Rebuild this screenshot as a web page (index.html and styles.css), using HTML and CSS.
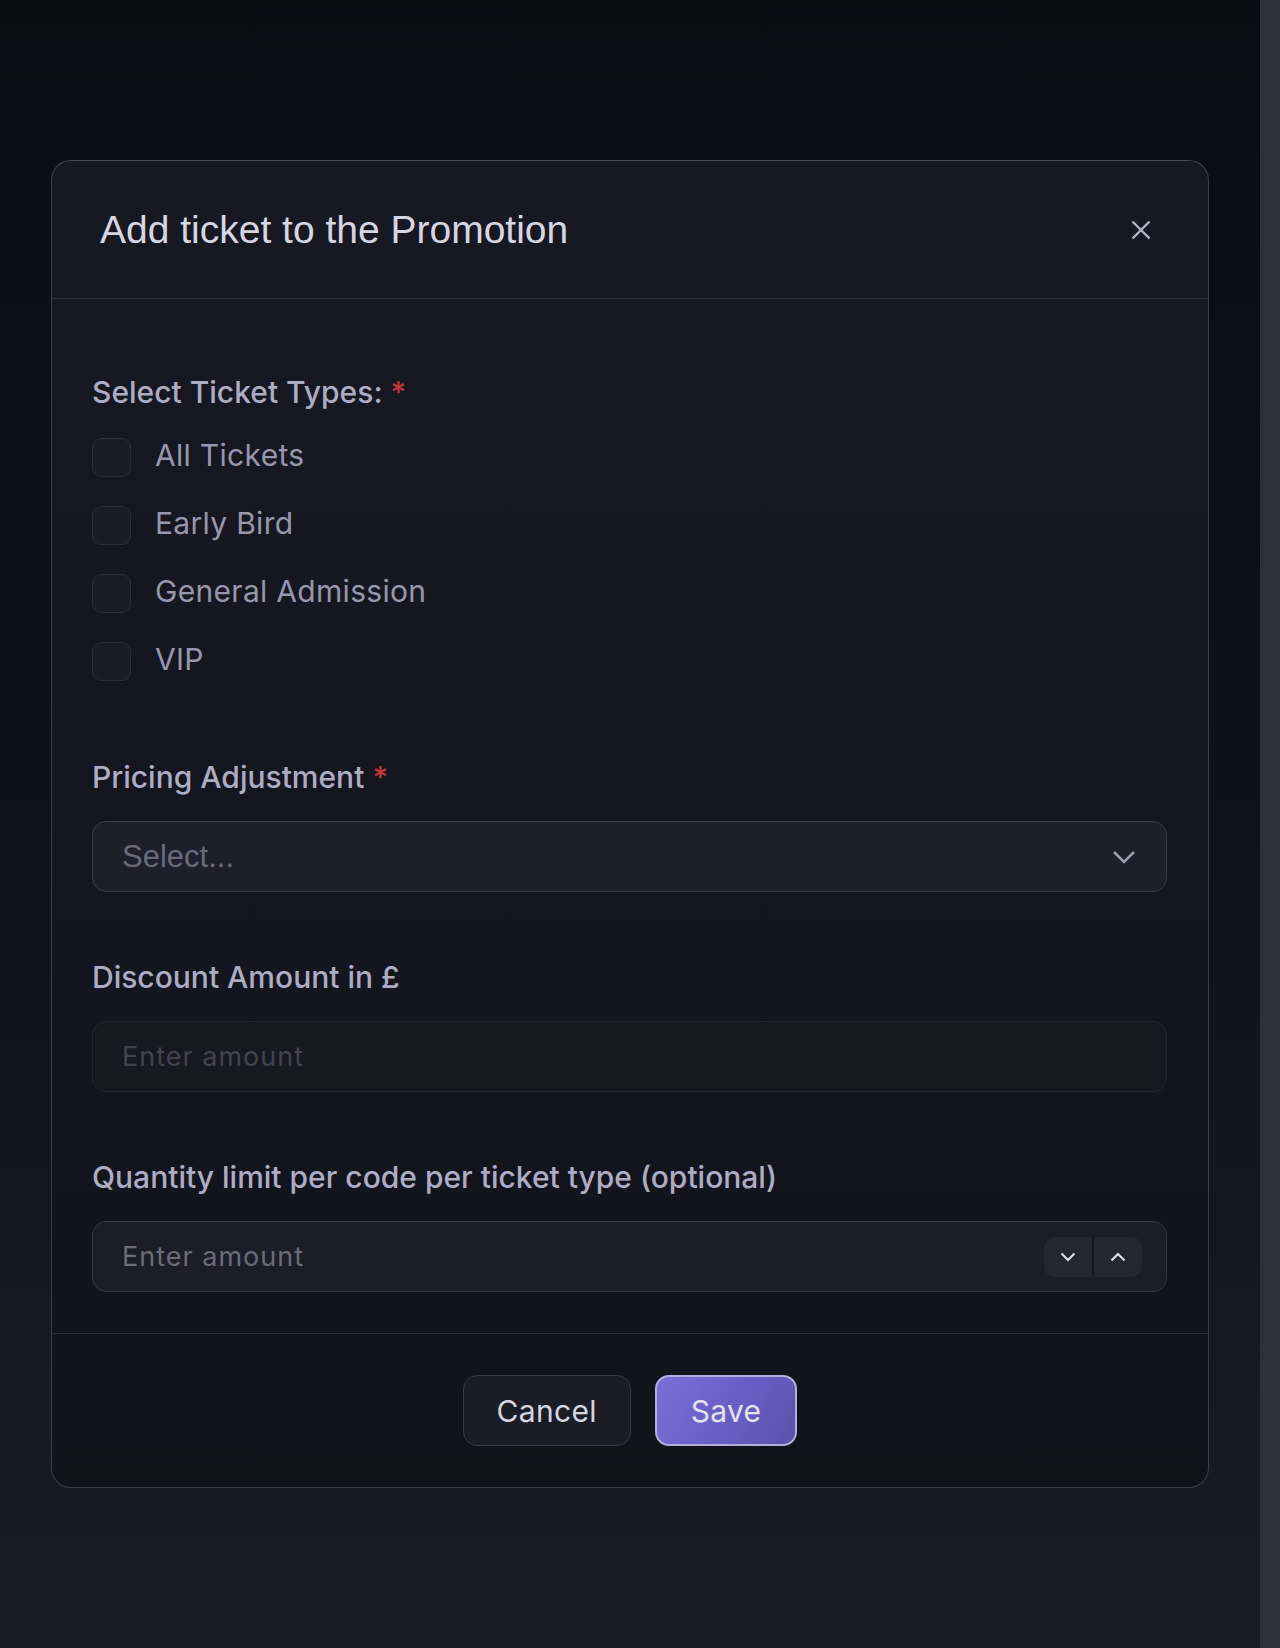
FILE: index.html
```html
<!DOCTYPE html>
<html lang="en">
<head>
    <meta charset="UTF-8">
    <meta name="viewport" content="width=device-width, initial-scale=1.0">
    <title>Add ticket to the Promotion</title>
    <link rel="stylesheet" href="styles.css">
</head>
<body>
    <div class="page">
        <main class="stage">
            <div class="modal">
                <header class="modal-head">
                    <h2 class="modal-title">Add ticket to the Promotion</h2>
                    <button class="close" type="button" aria-label="Close">
                        <svg width="20" height="20" viewBox="0 0 20 20"><path d="M1.5 1.5L18.5 18.5M18.5 1.5L1.5 18.5" /></svg>
                    </button>
                </header>

                <form class="modal-body">
                    <div class="field field-tickets">
                        <div class="label">Select Ticket Types: <span class="req">*</span></div>
                        <ul class="checks">
                            <li><label class="check"><input type="checkbox"><span>All Tickets</span></label></li>
                            <li><label class="check"><input type="checkbox"><span>Early Bird</span></label></li>
                            <li><label class="check"><input type="checkbox"><span>General Admission</span></label></li>
                            <li><label class="check"><input type="checkbox"><span>VIP</span></label></li>
                        </ul>
                    </div>

                    <div class="field">
                        <div class="label">Pricing Adjustment <span class="req">*</span></div>
                        <div class="select">
                            <span class="select-text">Select...</span>
                            <svg class="select-arrow" width="24" height="14" viewBox="0 0 24 14"><path d="M2 2L12 12L22 2" /></svg>
                        </div>
                    </div>

                    <div class="field">
                        <div class="label">Discount Amount in £</div>
                        <input class="input input-off" type="text" placeholder="Enter amount" disabled>
                    </div>

                    <div class="field">
                        <div class="label">Quantity limit per code per ticket type (optional)</div>
                        <div class="number">
                            <input class="input" type="text" placeholder="Enter amount">
                            <div class="spin">
                                <button type="button"><svg width="16" height="10" viewBox="0 0 16 10"><path d="M1.5 1.5L8 8L14.5 1.5" /></svg></button>
                                <button type="button"><svg width="16" height="10" viewBox="0 0 16 10"><path d="M1.5 8.5L8 2L14.5 8.5" /></svg></button>
                            </div>
                        </div>
                    </div>
                </form>

                <footer class="modal-foot">
                    <button class="btn btn-cancel" type="button">Cancel</button>
                    <button class="btn btn-save" type="button">Save</button>
                </footer>
            </div>
        </main>
        <div class="scrollbar"></div>
    </div>
</body>
</html>
```

FILE: styles.css
```css
/* page */
body{
    margin: 0;
    font-family: Inter, "Noto Sans", sans-serif;
    background: #0e0e17;
}
.page{
    display: flex;
    min-height: 1648px;
}
.stage{
    flex: 1;
    padding-top: 160px;
    background: linear-gradient(180deg, #0c0c15 0%, #10101a 45%, #1a1b25 100%);
}
.scrollbar{
    width: 20px;
    background: #2d3038;
}

/* modal */
.modal{
    width: 1158px;
    box-sizing: border-box;
    margin: 0 auto;
    border: 1px solid #3d3d4a;
    border-top-color: #484856;
    border-radius: 20px;
    background: linear-gradient(180deg, #181822 0%, #15151f 60%, #12121b 100%);
}
.modal-head{
    height: 138px;
    box-sizing: border-box;
    display: flex;
    align-items: center;
    justify-content: space-between;
    padding: 0 48px;
    border-bottom: 1px solid #2e2e3a;
}
.modal-title{
    margin: 0;
    font-family: "Liberation Sans", Arial, sans-serif;
    font-size: 39px;
    font-weight: 400;
    line-height: 48px;
    color: #d6d6e2;
}
.close{
    width: 38px;
    height: 38px;
    padding: 0;
    border: 0;
    background: none;
    display: flex;
    align-items: center;
    justify-content: center;
}
.close svg path{
    stroke: #b6b6c6;
    stroke-width: 2.4;
    fill: none;
}

/* form */
.modal-body{
    padding: 73px 41px 41px 40px;
    margin: 0;
}
.field + .field{ margin-top: 65px;}
.field-tickets + .field{ margin-top: 76px;}
.label{
    font-size: 30px;
    font-weight: 500;
    line-height: 40px;
    color: #aeacc2;
    margin-bottom: 24px;
}
.req{ color: #c2383c;}

.checks{
    list-style: none;
    margin: 26px 0 0;
    padding: 0;
}
.checks li + li{ margin-top: 29px;}
.check{
    display: flex;
    align-items: flex-start;
    gap: 24px;
    font-size: 30px;
    line-height: 34px;
    color: #9896ab;
    letter-spacing: 0.3px;
}
.check input{
    appearance: none;
    margin: 0;
    width: 39px;
    height: 39px;
    border: 1.5px solid #2d2d3a;
    border-radius: 9px;
    background: #1c1c27;
}

.select{
    height: 71px;
    box-sizing: border-box;
    display: flex;
    align-items: center;
    justify-content: space-between;
    padding: 0 30px 0 29px;
    border: 1.5px solid #3b3b49;
    border-radius: 14px;
    background: #1f1f2a;
}
.select-text{
    font-family: "Liberation Sans", Arial, sans-serif;
    font-size: 31px;
    color: #6a6a7a;
}
.select-arrow path{
    stroke: #9c9cae;
    stroke-width: 2.5;
    fill: none;
}

.input{
    display: block;
    width: 100%;
    height: 71px;
    box-sizing: border-box;
    margin: 0;
    padding: 0 29px;
    border: 1.5px solid #363644;
    border-radius: 14px;
    background: #1d1d27;
    font-family: Inter, sans-serif;
    font-size: 27px;
    letter-spacing: 1px;
    color: #d0d0dc;
    outline: none;
}
.input::placeholder{ color: #6b6b7a;}
.input-off{
    border-color: #252531;
    background: #181821;
}
.input-off::placeholder{ color: #43434f;}

.number{
    display: flex;
    align-items: center;
    height: 71px;
    box-sizing: border-box;
    border: 1.5px solid #363644;
    border-radius: 14px;
    background: #1d1d27;
    padding-right: 24px;
}
.number .input{
    flex: 1;
    height: 100%;
    border: 0;
    background: none;
}
.spin{
    display: flex;
    height: 40px;
    border-radius: 10px;
    overflow: hidden;
    background: #16161e;
    gap: 2px;
}
.spin button{
    width: 48px;
    padding: 0;
    border: 0;
    background: #262630;
    display: flex;
    align-items: center;
    justify-content: center;
}
.spin path{
    stroke: #e2e2ec;
    stroke-width: 2;
    fill: none;
}

/* footer */
.modal-foot{
    display: flex;
    justify-content: center;
    gap: 24px;
    padding: 41px 0;
    border-top: 1px solid #2e2e3a;
}
.btn{
    height: 71px;
    box-sizing: border-box;
    border-radius: 14px;
    font-family: Inter, sans-serif;
    font-size: 30px;
    letter-spacing: 0.3px;
}
.btn-cancel{
    padding: 0 33px;
    border: 1.5px solid #393946;
    background: #1c1c26;
    color: #d6d6e2;
}
.btn-save{
    padding: 0 34px;
    border: 2px solid #b4aedb;
    background: linear-gradient(120deg, #7a6ed8 0%, #6a5fc6 50%, #5b51ab 100%);
    color: #e4e2f6;
}
```
